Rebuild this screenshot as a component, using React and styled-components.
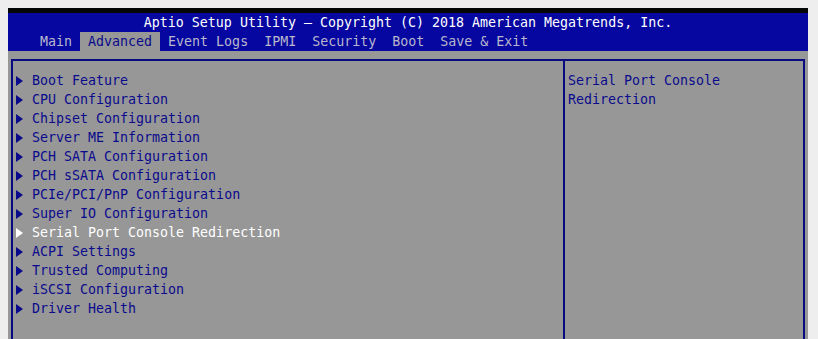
import styled, { createGlobalStyle } from "styled-components"

const GlobalStyle = createGlobalStyle`
    html, body {
        margin: 0;
        padding: 0;
        overflow: hidden;
        background: #eeeeee;
    }
    body {
        padding: 8px 8px 0;
        font-family: "DejaVu Sans Mono", "Liberation Mono", monospace;
    }
`

const Screen = styled.div`
    width: 800px;
    height: 331px;
    display: flex;
    flex-direction: column;
    background: #979797;
    font-size: 13.3px;
    line-height: 19px;
    white-space: pre;
`

const Header = styled.div`
    border-top: 5px solid #050505;
    background: #0606a0;
`

const Title = styled.div`
    text-align: center;
    color: #ffffff;
`

const TabBar = styled.div`
    display: flex;
    padding-left: 24px;
`

const Tab = styled.div`
    padding: 0 8px;
    color: ${p => (p.$active ? "#0a0a8c" : "#b8b8cc")};
    background: ${p => (p.$active ? "#979797" : "transparent")};
`

const Body = styled.div`
    flex: 1;
    display: flex;
    padding: 8px 3px 0;
`

const Frame = styled.div`
    flex: 1;
    display: flex;
    border: 2px solid #0a0a80;
    border-bottom: none;
`

const MenuPane = styled.div`
    flex: 1;
    padding: 10px 0 0 3px;
    border-right: 2px solid #0a0a80;
`

const HelpPane = styled.div`
    width: 238px;
    padding: 10px 0 0 3px;
    box-sizing: border-box;
    color: #0a0a8c;
`

const Item = styled.div`
    display: flex;
    align-items: center;
    gap: 9px;
    color: ${p => (p.$selected ? "#ffffff" : "#0a0a8c")};
`

const Arrow = styled.svg`
    width: 7px;
    height: 10px;
    flex-shrink: 0;
`

const tabs = ["Main", "Advanced", "Event Logs", "IPMI", "Security", "Boot", "Save & Exit"]

const items = [
    "Boot Feature",
    "CPU Configuration",
    "Chipset Configuration",
    "Server ME Information",
    "PCH SATA Configuration",
    "PCH sSATA Configuration",
    "PCIe/PCI/PnP Configuration",
    "Super IO Configuration",
    "Serial Port Console Redirection",
    "ACPI Settings",
    "Trusted Computing",
    "iSCSI Configuration",
    "Driver Health",
]

export default function App() {
    return (
        <>
            <GlobalStyle />
            <Screen>
                <Header>
                    <Title>Aptio Setup Utility – Copyright (C) 2018 American Megatrends, Inc.</Title>
                    <TabBar>
                        {tabs.map(t => (
                            <Tab key={t} $active={t === "Advanced"}>{t}</Tab>
                        ))}
                    </TabBar>
                </Header>
                <Body>
                    <Frame>
                        <MenuPane>
                            {items.map(label => {
                                const selected = label === "Serial Port Console Redirection"
                                return (
                                    <Item key={label} $selected={selected}>
                                        <Arrow viewBox="0 0 7 10">
                                            <polygon points="0,0 7,5 0,10" fill="currentColor" />
                                        </Arrow>
                                        {label}
                                    </Item>
                                )
                            })}
                        </MenuPane>
                        <HelpPane>
                            Serial Port Console{"\n"}Redirection
                        </HelpPane>
                    </Frame>
                </Body>
            </Screen>
        </>
    )
}
